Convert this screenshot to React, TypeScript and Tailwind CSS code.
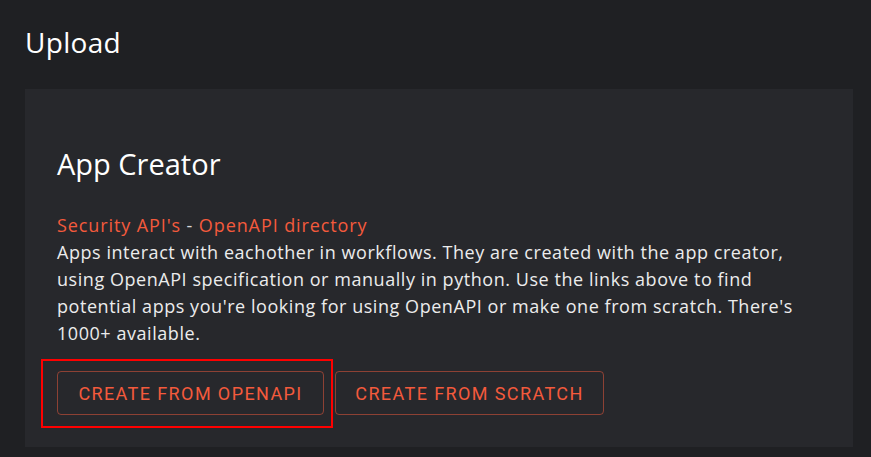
export default function App() {
  return (
    <div className="min-h-[457px] bg-[#1f2023] px-[25px] pt-[22px] pb-[10px] font-['Open_Sans',sans-serif] text-white">
      <h1 className="text-[28px] font-medium leading-[40px] tracking-[0.3px]">Upload</h1>
      <div className="mt-[27px] mr-[-7px] bg-[#27282c] px-[32px] pt-[55px] pb-[32px]">
        <h2 className="text-[29px] font-medium leading-[40px]">App Creator</h2>
        <div className="mt-[28px] text-[18px] leading-[27px] tracking-[0.9px]">
          <a className="text-[#f45a3c]">Security API's</a>
          <span className="text-[#d8d8d8]"> - </span>
          <a className="text-[#f45a3c]">OpenAPI directory</a>
        </div>
        <p className="text-[18px] leading-[27px] tracking-[0.55px] text-[#ececec]">
          Apps interact with eachother in workflows. They are created with the app creator, using OpenAPI
          specification or manually in python. Use the links above to find potential apps you're looking for
          using OpenAPI or make one from scratch. There's 1000+ available.
        </p>
        <div className="mt-[24px] flex gap-[11px]">
          <button className="relative h-[44px] w-[267px] rounded-[4px] border border-[#f45a3c]/50 font-['Roboto',sans-serif] text-[18px] tracking-[1.4px] text-[#f45a3c]">
            CREATE FROM OPENAPI
            <span className="pointer-events-none absolute -top-[13px] -left-[17px] -right-[10px] -bottom-[14px] border-2 border-[#ff0000]" />
          </button>
          <button className="h-[44px] w-[269px] rounded-[4px] border border-[#f45a3c]/50 font-['Roboto',sans-serif] text-[18px] tracking-[1.4px] text-[#f45a3c]">
            CREATE FROM SCRATCH
          </button>
        </div>
      </div>
    </div>
  );
}
